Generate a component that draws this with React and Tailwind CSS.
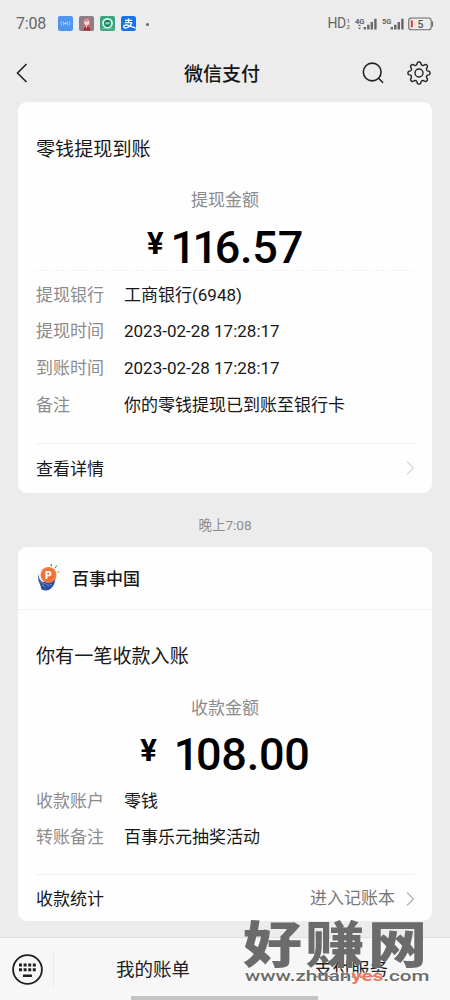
const rowsWithdraw = [
  { label: "提现银行", value: "工商银行(6948)" },
  { label: "提现时间", value: "2023-02-28 17:28:17" },
  { label: "到账时间", value: "2023-02-28 17:28:17" },
  { label: "备注", value: "你的零钱提现已到账至银行卡" },
];

const rowsIncome = [
  { label: "收款账户", value: "零钱" },
  { label: "转账备注", value: "百事乐元抽奖活动" },
];

function Signal({ label, sub }) {
  return (
    <svg width="24" height="16" viewBox="0 0 24 16" fill="#666">
      <text x="0" y="7.6" fontSize="7.6" fontWeight="700" fontFamily="Roboto, sans-serif">{label}</text>
      {sub && <path d="M3 10h3L4.5 8.6zM3 11.5h3l-1.5 2z" />}
      <path d="M8.7 11h2.3v2.6H8.7zM12.1 8.8h2.4v4.8h-2.4zM15.6 6H18v7.6h-2.4zM19.2 2.8h2.4v10.8h-2.4z" />
    </svg>
  );
}

function StatusBar() {
  return (
    <div className="flex h-[47px] items-center justify-between pl-[16px] pr-[16px] text-[#666]">
      <div className="flex items-center">
        <span className="w-[42px] text-[16px] tracking-[-0.2px]">7:08</span>
        <div className="flex items-center gap-[6px]">
          <svg width="15" height="15" viewBox="0 0 15 15">
            <rect width="15" height="15" rx="2" fill="#4f95ed" />
            <circle cx="7.5" cy="7.5" r="1.1" fill="#d5e7ff" />
            <path d="M5.4 5.5v4M9.6 5.5v4M3.6 5.2q-1.2 2.3 0 4.6M11.4 5.2q1.2 2.3 0 4.6" stroke="#a9ccfa" strokeWidth="0.9" fill="none" />
          </svg>
          <svg width="15" height="15" viewBox="0 0 15 15">
            <rect width="15" height="15" rx="2" fill="#8b7f86" />
            <path d="M3.5 12Q2.5 2 7.5 1.5 12.5 2 11.5 12z" fill="#b7747b" />
            <ellipse cx="7.8" cy="6.3" rx="2.6" ry="3" fill="#f3d5cf" />
            <path d="M4 5Q7 2 11 5L9 4.8 7.5 6 6 4.8z" fill="#cf7f86" />
            <path d="M4.5 14.5Q5 10 8 10t3.3 4.5z" fill="#a92d35" />
            <path d="M6.5 9.5h2l-1 3z" fill="#f1d9d2" />
          </svg>
          <svg width="15" height="15" viewBox="0 0 15 15">
            <rect width="15" height="15" rx="2" fill="#3da482" />
            <circle cx="7.5" cy="7.3" r="4.5" fill="#16826b" stroke="#e6f8f0" strokeWidth="1.8" />
            <path d="M5.2 6.2h4.6v2.2H5.2z" fill="#8fd2b8" />
            <path d="M1.5 12.8h12" stroke="#79c9a7" strokeWidth="0.9" />
          </svg>
          <svg width="15" height="15" viewBox="0 0 15 15">
            <rect width="15" height="15" rx="2.5" fill="#1a72e8" />
            <path d="M4 4.4h7M7.5 2.4v4.2M3.8 6.7h6.9q-1 3-3.2 4.3-2.6 1.5-4.2.7-1.4-1.2.3-2.4 1.8-.8 4.4.4l6.6 2.4" fill="none" stroke="#fff" strokeWidth="1.3" />
          </svg>
        </div>
        <span className="ml-[10px] mt-px h-[3px] w-[3px] rounded-full bg-[#666]" />
      </div>
      <div className="flex items-center">
        <span className="text-[14px] tracking-[-0.6px]">HD</span>
        <span className="ml-px mr-[5px] flex flex-col text-[6px] font-medium leading-[6px]">
          <span>1</span>
          <span>2</span>
        </span>
        <Signal label="4G" sub />
        <span className="w-[3px]" />
        <Signal label="5G" />
        <svg className="ml-[2px]" width="26" height="14" viewBox="0 0 26 14">
          <rect x="0.7" y="1" width="22.5" height="11.8" rx="2.8" fill="none" stroke="#6b6b6b" strokeWidth="1.1" />
          <path d="M24.4 4.5v5" stroke="#6b6b6b" strokeWidth="1.4" />
          <rect x="2.8" y="3.2" width="2" height="7.4" rx="0.8" fill="#f0303c" />
          <text x="12.6" y="10.8" fontSize="10.5" fontWeight="500" textAnchor="middle" fill="#555" fontFamily="Roboto, sans-serif">5</text>
        </svg>
      </div>
    </div>
  );
}

function Gear() {
  const teeth = 8;
  const pts = [];
  for (let i = 0; i < 128; i++) {
    const a = (i / 128) * Math.PI * 2;
    const r = 9.7 + 1.5 * Math.tanh(1.6 * Math.cos(a * teeth));
    pts.push(`${(12 + r * Math.sin(a)).toFixed(2)},${(12 - r * Math.cos(a)).toFixed(2)}`);
  }
  return (
    <svg width="24" height="24" viewBox="0 0 24 24" fill="none" stroke="#222" strokeWidth="1.4" strokeLinejoin="round">
      <polygon points={pts.join(" ")} />
      <circle cx="12" cy="12" r="4" />
    </svg>
  );
}

function Header() {
  return (
    <div className="grid h-[55px] grid-cols-3 items-center pb-[3px] pl-[15px] pr-[19px]">
      <svg width="14" height="20" viewBox="0 0 14 20" fill="none" stroke="#222" strokeWidth="1.6">
        <path d="M11.5 1L2.5 10l9 9" />
      </svg>
      <div className="pt-[3px] text-center text-[19px] font-medium leading-[28px] text-[#151515]">
        <span className="relative left-[-1px]">微信支付</span>
      </div>
      <div className="flex items-center justify-end gap-[23px]">
        <svg width="22" height="22" viewBox="0 0 22 22" fill="none" stroke="#222" strokeWidth="1.6">
          <circle cx="10.2" cy="10" r="8.9" />
          <path d="M16.5 16.2l4.6 4.6" />
        </svg>
        <Gear />
      </div>
    </div>
  );
}

function Rows({ rows }) {
  return (
    <div>
      {rows.map((row) => (
        <div key={row.label} className="flex h-[36.7px] items-center text-[17px]">
          <span className="w-[88px] text-[#8c8c8c]">{row.label}</span>
          <span className="text-[#181818]">{row.value}</span>
        </div>
      ))}
    </div>
  );
}

// leading ones are set tighter than the other digits
function Amount({ ones, rest, gap }) {
  return (
    <div className="flex h-[46px] items-start justify-center text-black">
      <span className={"text-[31px] font-bold leading-[39px] " + gap}>¥</span>
      <span className="text-[45px] font-medium leading-[47px]">
        <span className="tracking-[-3.5px]">{ones}</span>
        <span className="tracking-[-0.2px]">{rest}</span>
      </span>
    </div>
  );
}

function Chevron({ color }) {
  return (
    <svg className="relative left-px" width="9" height="16" viewBox="0 0 9 16" fill="none" stroke={color} strokeWidth="1.4">
      <path d="M1 1.5L7.5 8 1 14.5" />
    </svg>
  );
}

function PepsiLogo() {
  return (
    <svg width="24" height="28" viewBox="0 0 24 28">
      <path d="M1.5 10q-1 7 1.5 10l1.5 5.5q7 2.5 10.5-2 3-3.5 3.5-8.5l-6 2-7 1-3-3z" fill="#294f9e" />
      <circle cx="11.5" cy="11" r="8" fill="#ef7b3d" />
      <circle cx="11.5" cy="11" r="5.8" fill="#f06d33" />
      <text x="11.5" y="15" fontSize="10.5" fontWeight="900" textAnchor="middle" fill="#fff" fontFamily="Roboto, sans-serif">P</text>
      <path d="M2.5 17l4 3 2-1M5 21l3 1.5M9 20l3 2M12 20l3 1" stroke="#7898d4" strokeWidth="0.8" fill="none" />
      <path d="M14.2 0v2.2" stroke="#397480" strokeWidth="1.1" />
      <path d="M18 4l1.8-2.3" stroke="#549a79" strokeWidth="1.1" />
      <path d="M20 8h3" stroke="#edb74b" strokeWidth="1.2" />
    </svg>
  );
}

function Watermark() {
  return (
    <div className="pointer-events-none absolute left-[243px] top-[-16px] w-[190px] text-[#6b6b6b]">
      <div className="h-[49px] origin-top-left scale-y-[0.84] whitespace-nowrap text-[59px] font-black leading-[58px] tracking-[3.5px]">好赚网</div>
      <div className="relative left-[2px] top-[-3px] w-[140px] origin-left scale-x-[1.33] whitespace-nowrap text-[15.5px] font-medium leading-[16px] [text-shadow:0_0_2px_#fff,0_0_2px_#fff]">
        www.zhuan<span className="font-bold text-[#ee765f]">yes</span>.com
      </div>
    </div>
  );
}

function BottomBar() {
  return (
    <div className="relative flex h-[63px] flex-col justify-between border-t border-[#e0e0e0] bg-[#f7f7f7]">
      <div className="flex h-[58px] items-center pt-[5px]">
        <div className="flex h-[34px] w-[54px] items-center border-r border-[#e9e9e9] pl-[12px]">
          <svg width="31" height="31" viewBox="0 0 31 31">
            <circle cx="15.5" cy="15.5" r="14.4" fill="none" stroke="#202020" strokeWidth="1.8" />
            <path d="M7 9.5h3v3H7zM11.6 9.5h3v3h-3zM16.2 9.5h3v3h-3zM20.8 9.5h3v3h-3zM7 14.3h3v3H7zM11.6 14.3h3v3h-3zM16.2 14.3h3v3h-3zM20.8 14.3h3v3h-3zM11 20.5h9V23h-9z" fill="#202020" />
          </svg>
        </div>
        <div className="flex-1 pt-[2px] text-center text-[18.5px] text-[#202020]">我的账单</div>
        <div className="flex-1 pt-[2px] text-center text-[18.5px] text-[#202020]">支付服务</div>
      </div>
      <div className="ml-[131px] h-[4px] w-[187px] bg-[#c4c4c4]" />
      <Watermark />
    </div>
  );
}

export default function App() {
  return (
    <div className="flex h-[1000px] w-[450px] flex-col overflow-hidden bg-[#ececec] font-[Roboto,'Noto_Sans_CJK_SC',sans-serif]">
      <StatusBar />
      <Header />

      <div className="mx-[18px] h-[391px] rounded-[9px] bg-[#fefefe] px-[18px] pt-[33px]">
        <div className="h-[29px] text-[19.1px] leading-[30px] text-[#181818]">零钱提现到账</div>
        <div className="mt-[23px] h-[26px] text-center text-[17px] leading-[26px] text-[#8c8c8c]">提现金额</div>
        <div className="mt-[11px]">
          <Amount ones="11" rest="6.57" gap="mr-[7px]" />
        </div>
        <div className="mb-[6px] border-t border-dashed border-[#f0f0f0]" />
        <Rows rows={rowsWithdraw} />
        <div className="mt-[19px] flex h-[50px] items-center justify-between border-t border-[#f0f0f0] text-[17px] text-[#181818]">
          <span className="pt-[2px]">查看详情</span>
          <Chevron color="#dcdcdc" />
        </div>
      </div>

      <div className="flex h-[54px] items-center justify-center pt-[10px] text-[13.5px] text-[#8c8c8c]">晚上7:08</div>

      <div className="mx-[18px] h-[374px] rounded-[9px] bg-[#fefefe]">
        <div className="flex h-[63px] items-center gap-[11px] border-b border-[#f1f1f1] pl-[19px] text-[17px] font-medium text-[#181818]">
          <PepsiLogo />
          <span className="pt-[3px]">百事中国</span>
        </div>
        <div className="px-[18px] pt-[32px]">
          <div className="h-[30px] text-[19.1px] leading-[30px] text-[#181818]">你有一笔收款入账</div>
          <div className="mt-[23px] h-[26px] text-center text-[17px] leading-[26px] text-[#8c8c8c]">收款金额</div>
          <div className="mt-[10px]">
            <Amount ones="1" rest="08.00" gap="mr-[17px]" />
          </div>
          <div className="mt-[6px]">
            <Rows rows={rowsIncome} />
          </div>
          <div className="mt-[18px] flex h-[46px] items-center justify-between border-t border-[#f0f0f0] text-[17px]">
            <span className="pt-[3px] text-[#181818]">收款统计</span>
            <span className="flex items-center gap-[10px] pt-[2px] text-[#777]">
              进入记账本
              <Chevron color="#b5b5b5" />
            </span>
          </div>
        </div>
      </div>

      <div className="flex-1" />
      <BottomBar />
    </div>
  );
}
